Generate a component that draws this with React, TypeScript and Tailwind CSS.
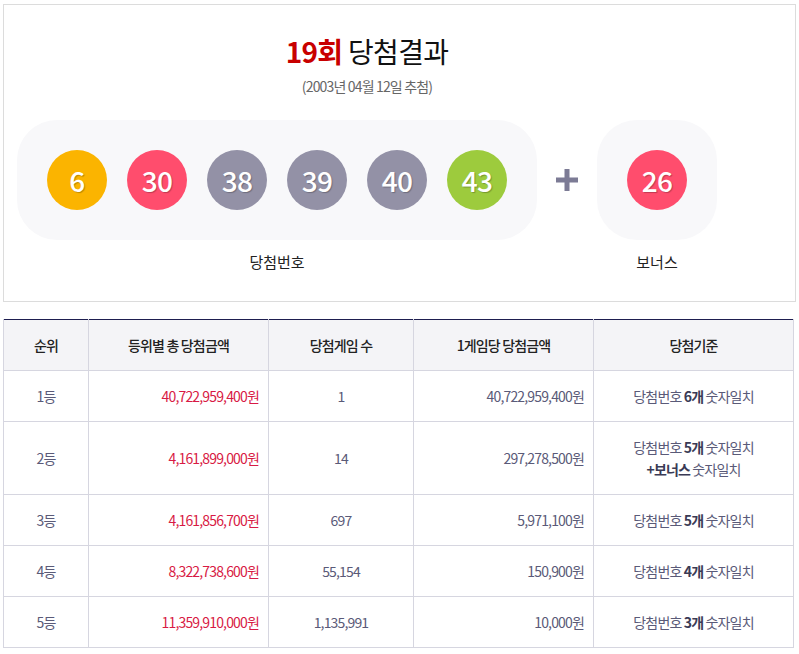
import React from 'react';

const font = { fontFamily: '"Noto Sans CJK KR", "Noto Sans", sans-serif' };

const balls = [
  { n: 6, color: 'bg-[#fbb400]' },
  { n: 30, color: 'bg-[#ff4d6d]' },
  { n: 38, color: 'bg-[#9391a6]' },
  { n: 39, color: 'bg-[#9391a6]' },
  { n: 40, color: 'bg-[#9391a6]' },
  { n: 43, color: 'bg-[#9dcb3d]' },
];

const rows = [
  { rank: '1등', total: '40,722,959,400원', count: '1', per: '40,722,959,400원', n: '6개', bonus: false },
  { rank: '2등', total: '4,161,899,000원', count: '14', per: '297,278,500원', n: '5개', bonus: true },
  { rank: '3등', total: '4,161,856,700원', count: '697', per: '5,971,100원', n: '5개', bonus: false },
  { rank: '4등', total: '8,322,738,600원', count: '55,154', per: '150,900원', n: '4개', bonus: false },
  { rank: '5등', total: '11,359,910,000원', count: '1,135,991', per: '10,000원', n: '3개', bonus: false },
];

function Ball({ n, color }: { n: number; color: string }) {
  return (
    <div
      className={`w-[60px] h-[60px] rounded-full ${color} flex items-center justify-center text-white text-[28px] font-medium tracking-tight`}
      style={{ textShadow: '1px 1px 1px rgba(0,0,0,0.25)' }}
    >
      {n}
    </div>
  );
}

export default function App() {
  return (
    <div className="bg-white w-[799px] h-[654px] pt-[4px] px-[3px]" style={font}>
      <div className="border border-[#dcdcdc] h-[298px] pl-[13px]">
        <div className="w-[700px] flex flex-col items-center">
          <h2 className="mt-[28px] text-[28px] leading-[36px] text-[#111] tracking-tight">
            <span className="text-[#c80000] font-semibold">19회</span> 당첨결과
          </h2>
          <p className="mt-[8px] text-[14px] leading-[18px] text-[#666] tracking-[-0.06em]">(2003년 04월 12일 추첨)</p>
        </div>
        <div className="mt-[25px] flex items-start">
          <div className="flex flex-col items-center">
            <div className="bg-[#f8f8fa] rounded-[40px] w-[520px] h-[120px] px-[30px] flex items-center gap-[20px]">
              {balls.map((b) => (
                <Ball key={b.n} {...b} />
              ))}
            </div>
            <div className="mt-[12px] text-[15px] leading-[20px] text-[#222]">당첨번호</div>
          </div>
          <div className="w-[60px] h-[120px] flex items-center justify-center">
            <svg width="22" height="22" viewBox="0 0 22 22">
              <rect x="0" y="8.5" width="22" height="5" fill="#7c7b95" />
              <rect x="8.5" y="0" width="5" height="22" fill="#7c7b95" />
            </svg>
          </div>
          <div className="flex flex-col items-center">
            <div className="bg-[#f8f8fa] rounded-[40px] w-[120px] h-[120px] flex items-center justify-center">
              <Ball n={26} color="bg-[#ff4d6d]" />
            </div>
            <div className="mt-[12px] text-[15px] leading-[20px] text-[#222]">보너스</div>
          </div>
        </div>
      </div>

      <table className="mt-[17px] w-[790px] border-collapse border-t border-t-[#1e1e50] text-[14px] tracking-[-0.06em] table-fixed">
        <colgroup>
          <col className="w-[85px]" />
          <col className="w-[180px]" />
          <col className="w-[145px]" />
          <col className="w-[180px]" />
          <col className="w-[200px]" />
        </colgroup>
        <thead>
          <tr className="bg-[#f4f4f7] h-[51px] text-[#222]">
            {['순위', '등위별 총 당첨금액', '당첨게임 수', '1게임당 당첨금액', '당첨기준'].map((h) => (
              <th key={h} className="font-medium border border-[#d6d6e0] border-t-0 text-center">
                {h}
              </th>
            ))}
          </tr>
        </thead>
        <tbody className="text-[#5a5a78]">
          {rows.map((r) => (
            <tr key={r.rank} className={r.bonus ? 'h-[73px]' : 'h-[51px]'}>
              <td className="border border-[#d6d6e0] text-center">{r.rank}</td>
              <td className="border border-[#d6d6e0] text-right pr-[9px] text-[#d81a44]">{r.total}</td>
              <td className="border border-[#d6d6e0] text-center">{r.count}</td>
              <td className="border border-[#d6d6e0] text-right pr-[9px]">{r.per}</td>
              <td className="border border-[#d6d6e0] text-center leading-[22px]">
                당첨번호 <b className="font-bold text-[#3a3a55]">{r.n}</b> 숫자일치
                {r.bonus && (
                  <>
                    <br />
                    <b className="font-bold text-[#3a3a55]">+보너스</b> 숫자일치
                  </>
                )}
              </td>
            </tr>
          ))}
        </tbody>
      </table>
    </div>
  );
}
